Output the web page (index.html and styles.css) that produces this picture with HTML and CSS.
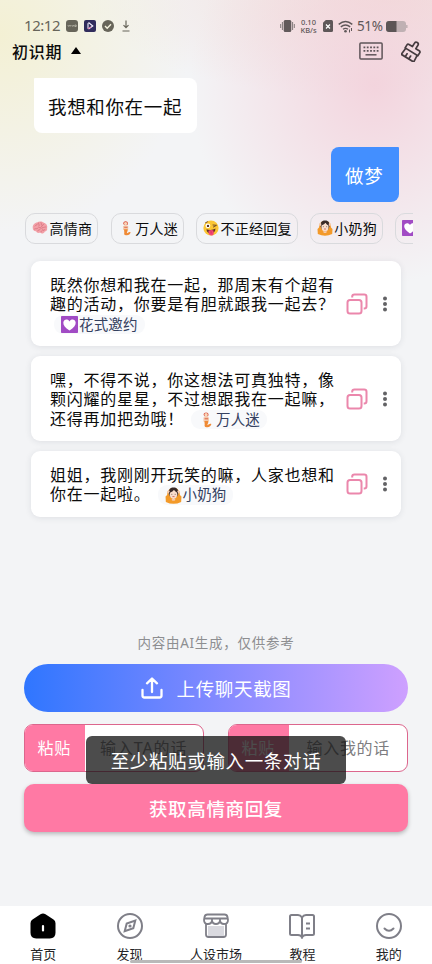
FILE: index.html
```
<!DOCTYPE html>
<html lang="zh-CN">
<head>
<meta charset="utf-8">
<title>初识期</title>
<link rel="stylesheet" href="styles.css">
</head>
<body>
<svg class="defs" width="0" height="0" aria-hidden="true">
  <symbol id="brain" viewBox="0 0 16 16">
    <path d="M.8 8C.2 5 3 2.5 5 2.5 7 .8 11 1.3 12.3 3c2.4.4 3.5 3 2.8 5 .6 2-.8 3.4-2.3 3.4-.8 2.4-3.5 2.8-4.5 1.2C6.500 13.300 4.500 13 4.200 11.300 2.200 11.500.600 10 .800 8Z" fill="#f2a0a7"/>
    <path d="M3 6c1-1.500 2-.500 2.500-2M2.500 9c2-1 2 .5 3.500-1M6.500 3c-.5 1.500 1.500 1.500.500 3M9 2.500c1 1-.5 2 1 3M12 4c-.5 1.500-2 .500-2.500 2.500M14 7c-1.500-.5-2 1-3.500.500M5.500 11c.500-1.500 2-.500 3-2M9 12c0-1.500 1.500-1 2-2.500M13 9.500l-1.500 1M7 7.500c1.500.500 2-.500 3 1" fill="none" stroke="#d8717d" stroke-width=".8" stroke-linecap="round"/>
  </symbol>
  <symbol id="mermaid" viewBox="0 0 16 16">
    <path d="M5.300 3.500C5.200.800 10 .500 9.900 3.600L9.500 5H6Z" fill="#d8503d"/>
    <circle cx="7.600" cy="3.500" r="1.600" fill="#f9d5b8"/>
    <path d="M6 5.500q1.700-.7 3.400 0l.2 4.500H6.200Z" fill="#f4c7a6"/>
    <path d="M5.700 6v4M9.700 6v3.500" stroke="#f1bd99" stroke-width=".9"/>
    <path d="M6.200 6.800h3.300v1H6.200Z" fill="#df6d54"/>
    <path d="M6 9.300h3.700c.3 2.200-1 2.600-.8 4 1.200-.4 2.200-1.700 3.700-1-.4 2-2 3.200-4.200 3-2.300.2-2.400-1.200-2.100-2.800Z" fill="#ef8a35"/>
  </symbol>
  <symbol id="wink" viewBox="0 0 16 16">
    <circle cx="8" cy="8" r="7.600" fill="#fbc634"/>
    <circle cx="4.900" cy="5.800" r="2.400" fill="#fff"/><circle cx="5" cy="5.900" r="1.200" fill="#563527"/>
    <path d="m10 5 3.500.3L10.400 7M2.500 2.800l2-1" fill="none" stroke="#654022" stroke-width=".9" stroke-linecap="round"/>
    <path d="M3.500 9.200q4.800 1.700 9-.6-.2 4.500-4.500 4.600T3.500 9.200Z" fill="#603323"/>
    <path d="M5.500 10.700q2.500-1 5-.3l.2 3.300q-.3 2-2.400 1.900T5.700 13.500Z" fill="#f44774"/>
    <path d="m8 11 .2 2.500" stroke="#c72b58" stroke-width=".6"/>
  </symbol>
  <symbol id="person" viewBox="0 0 16 16">
    <path d="M2 7.500 2.500 3.800 5 1.500l6 0 2.500 2.300.5 3.700 1.500 1.500-.3 5q-7.200 3.600-14.400 0L.5 9Z" fill="#f39a29"/>
    <path d="M3.500 6.500C3.100 1.600 6 .300 8 .500c3-.3 5 2 4.500 6l-1.400 3H5Z" fill="#392a28"/>
    <path d="m2 4.500 1.600-1.700 1 1.500L3 6.500ZM14 4.500l-1.600-1.700-1 1.500L13 6.500Z" fill="#f5cdb5"/>
    <ellipse cx="8" cy="7" rx="3.600" ry="4.200" fill="#f9ddcc"/>
    <path d="M4.400 5.500Q7.500 4.500 8.500 2.700q1 2 3.200 2.700Q11.500 2 8 2T4.400 5.500Z" fill="#392a28"/>
    <path d="M6.400 6.500v.6M9.600 6.500v.6" stroke="#493332" stroke-width=".9"/>
    <path d="M7 9h2" stroke="#c55d55" stroke-width=".8"/>
    <path d="M6.400 10.800q1.600 1 3.200 0v1.700q-1.600 1-3.200 0Z" fill="#f4c9ae"/>
  </symbol>
  <symbol id="heart" viewBox="0 0 16 16">
    <rect width="16" height="16" rx=".7" fill="#a14bc4"/>
    <path d="M8 13.600C3.900 10.800 2 8.500 2.200 6 2.500 2.800 6.500 2.200 8 5.100c1.500-2.900 5.500-2.300 5.800.9.200 2.500-1.700 4.800-5.800 7.600Z" fill="#fff"/>
  </symbol>
  <symbol id="copy" viewBox="0 0 22 22">
    <g fill="none" stroke="#eb87ac" stroke-width="2"><rect x="1.500" y="7" width="14" height="13.500" rx="2.500"/><path d="M6.200 4.500v-.7q0-2.300 2.300-2.300h9.700q2.300 0 2.300 2.300v9.400q0 2.300-2.300 2.300h-.5"/></g>
  </symbol>
  <symbol id="dots" viewBox="0 0 6 16">
    <g fill="#626265"><circle cx="3" cy="2.500" r="2"/><circle cx="3" cy="8" r="2"/><circle cx="3" cy="13.500" r="2"/></g>
  </symbol>
</svg>
<div class="app">
  <div class="status">
    <span class="clock">12:12</span>
    <svg class="notices" width="66" height="14" viewBox="0 0 66 14">
      <rect x="0" y="1" width="12" height="12" rx="3" fill="#67655a"/><path d="m1.800 6 1 1.500L3.700 6m1 0v1.500M5.800 6l1 1.500L7.800 6m1 0h1.400v1.500H8.800Z" fill="none" stroke="#d5d3c6" stroke-width=".6"/>
      <rect x="18" y="1" width="12" height="12" rx="2" fill="#302c5c"/><path d="M22 4.300v5.400M22.500 3.500l4.300 3.500-4.300 3" fill="none" stroke="#f5f2ff" stroke-width="1.100"/><path d="M22 9.700 25 8" stroke="#ec6ca6"/>
      <circle cx="42" cy="7" r="6" fill="#67655a"/><path d="m39 7 2.200 2.200L45 5.300" fill="none" stroke="#f5f3df" stroke-width="1.400"/>
      <path d="M60 1.500v7M57.500 6.200 60 8.700l2.500-2.500M56.500 12h7" fill="none" stroke="#67655a" stroke-width="1.200"/>
    </svg>
    <div class="signals">
      <svg width="15" height="14" viewBox="0 0 15 14"><rect x="3.700" y="1" width="7.600" height="12" rx="1.500" fill="#625a5b"/><path d="M2.400 3v8M.7 5v4M12.600 3v8M14.300 5v4" stroke="#81797a" stroke-width="1"/></svg>
      <span class="rate"><span>0.10</span><span>KB/s</span></span>
      <svg class="sim" width="10" height="12" viewBox="0 0 10 12"><path d="M2.800 0H8.500Q10 0 10 1.500v9Q10 12 8.500 12h-7Q0 12 0 10.500V2.800Z" fill="#5e5758"/><path d="m3 4.500 4 4m0-4-4 4" stroke="#fff" stroke-width="1.200"/></svg>
      <svg class="wifi" width="15" height="13" viewBox="0 0 15 13"><g fill="none" stroke="#5e5758" stroke-width="1.400"><path d="M.7 4.400Q7.500-1.300 14.300 4.400M2.800 6.900q4.700-3.800 9.400 0M5 9.300q2.500-1.900 5 0"/></g><circle cx="7.500" cy="11.300" r="1.300" fill="#5e5758"/><path d="M11.500 9.500v3M13.500 8v3" stroke="#5e5758"/></svg>
      <span class="percent">51%</span>
      <svg class="battery" width="22" height="11" viewBox="0 0 22 11"><rect width="20" height="11" rx="3" fill="#bfb0b3"/><path d="M3 0h7.500v11H3Q0 11 0 8V3Q0 0 3 0Z" fill="#5c5556"/><path d="M20.800 4v3" stroke="#bfb0b3" stroke-width="1.500"/></svg>
    </div>
  </div>
  <header class="header">
    <span>初识期</span><i class="caret"></i>
    <svg class="keyboard" width="24" height="18" viewBox="0 0 24 18"><rect x=".9" y=".9" width="22.200" height="16.200" rx="1" fill="none" stroke="#5f5559" stroke-width="1.500"/><path d="M4.500 5.300h15.500M4.500 8.800h15.500" stroke="#5f5559" stroke-width="1.800" stroke-dasharray="1.800 1.500"/><path d="M6.500 12.800h11" stroke="#5f5559" stroke-width="1.500"/></svg>
    <svg class="brush" width="22" height="22" viewBox="0 0 22 22"><g transform="rotate(32 11 11)" fill="none" stroke="#453b3f" stroke-width="1.700" stroke-linejoin="round" stroke-linecap="round"><path d="M9 7V3Q9 1 11 1t2 2V7h4q1.500 0 1.500 1.500V12h-15V8.500Q3.500 7 5 7ZM4.300 12l-.6 7.500h14.600l-.6-7.500M8.300 19v-3M12.500 19v-3"/></g></svg>
  </header>
  <main class="chat">
    <div class="bubble incoming">我想和你在一起</div>
    <div class="bubble outgoing">做梦</div>
  </main>
  <div class="chips">
    <span class="chip"><svg><use href="#brain"/></svg>高情商</span>
    <span class="chip"><svg><use href="#mermaid"/></svg>万人迷</span>
    <span class="chip"><svg><use href="#wink"/></svg>不正经回复</span>
    <span class="chip"><svg><use href="#person"/></svg>小奶狗</span>
    <span class="chip"><svg><use href="#heart"/></svg></span>
  </div>
  <section class="replies">
    <article class="card"><p>既然你想和我在一起，那周末有个超有<br>趣的活动，你要是有胆就跟我一起去？<br><span class="tag first"><svg><use href="#heart"/></svg>花式邀约</span></p><svg class="copy"><use href="#copy"/></svg><svg class="dots"><use href="#dots"/></svg></article>
    <article class="card"><p>嘿，不得不说，你这想法可真独特，像<br>颗闪耀的星星，不过想跟我在一起嘛，<br>还得再加把劲哦！<span class="tag"><svg><use href="#mermaid"/></svg>万人迷</span></p><svg class="copy"><use href="#copy"/></svg><svg class="dots"><use href="#dots"/></svg></article>
    <article class="card"><p>姐姐，我刚刚开玩笑的嘛，人家也想和<br>你在一起啦。<span class="tag"><svg><use href="#person"/></svg>小奶狗</span></p><svg class="copy"><use href="#copy"/></svg><svg class="dots"><use href="#dots"/></svg></article>
  </section>
  <section class="actions">
    <div class="hint">内容由AI生成，仅供参考</div>
    <div class="upload"><svg width="22" height="22" viewBox="0 0 22 22"><path d="M11 15V2M6 6.300 11 1.500l5 4.800M1.500 13v5.500q0 2 2 2h15q2 0 2-2V13" fill="none" stroke="#fff" stroke-width="2.300" stroke-linecap="round" stroke-linejoin="round"/></svg>上传聊天截图</div>
    <div class="inputs">
      <div class="field"><b>粘贴</b><span>输入TA的话</span></div>
      <div class="field"><b>粘贴</b><span>输入我的话</span></div>
      <div class="toast">至少粘贴或输入一条对话</div>
    </div>
    <div class="submit">获取高情商回复</div>
  </section>
  <nav class="tabs">
    <div class="tab"><svg viewBox="0 0 26 26"><path d="M10.500 1.300q2.500-1.700 5 0l8 5.200q2 1.300 2 3.800v9.500q0 5.700-5.700 5.700H6.200Q.5 25.500.500 19.800v-9.500Q.5 7.800 2.500 6.500Z" fill="#000"/><path d="M13 13v4.500" stroke="#fff" stroke-width="2.200" stroke-linecap="round"/></svg>首页</div>
    <div class="tab"><svg viewBox="0 0 26 26"><g fill="none" stroke="#7f7f88" stroke-width="2"><circle cx="13" cy="13" r="12"/><path d="m18.300 7.500-2 7.800-8.600 3 2-7.800Z"/></g><circle cx="13" cy="13" r="1.600" fill="#7f7f88"/></svg>发现</div>
    <div class="tab"><svg viewBox="0 0 26 26"><path d="M5 13h16v10H5Z" fill="#d9d9df"/><path d="M3 11v10.500q0 2.500 2.500 2.500h15q2.500 0 2.500-2.500V11M4.500 1.500h17Q24 1.500 24.500 4L25 7q0 4-4 4-3.500 0-4-3.500Q16.500 11 13 11T9 7.500Q8.500 11 5 11 1 11 1 7L1.500 4Q2 1.500 4.500 1.500ZM9 7.500V5.500M17 7.500V5.500M2 5.500h22" fill="none" stroke="#7f7f88" stroke-width="1.800" stroke-linejoin="round"/></svg>人设市场</div>
    <div class="tab"><svg viewBox="0 0 26 26"><path d="M13 4.500Q11.500 2 9 2H2.500Q1 2 1 3.500v17Q1 22 2.500 22H9q3 0 4 2.500Q14 22 17 22h6.500q1.500 0 1.500-1.500v-17Q25 2 23.500 2H17q-2.500 0-4 2.500Zm0 0v19M17 10.500h4M17 15.500h4" fill="none" stroke="#7f7f88" stroke-width="2"/></svg>教程</div>
    <div class="tab"><svg viewBox="0 0 26 26"><g fill="none" stroke="#7f7f88" stroke-width="2" stroke-linecap="round"><circle cx="13" cy="13" r="12"/><path d="M8.500 15.500q4.500 4.500 9 0"/></g></svg>我的</div>
    <i class="handle"></i>
  </nav>
</div>
</body>
</html>
```
FILE: styles.css
```
* { box-sizing: border-box; }
body {
  margin: 0;
  font-family: "Noto Sans", "Noto Sans CJK SC", sans-serif;
  color: #0c0c0c;
}
svg { flex: none; }
.defs { position: absolute; }
.app {
  width: 432px;
  height: 964px;
  overflow: hidden;
  display: flex;
  flex-direction: column;
  background:
    radial-gradient(ellipse 190px 200px at 0 35px, rgba(243, 240, 210, .95), rgba(243, 240, 210, 0)),
    radial-gradient(ellipse 185px 200px at 375px 85px, rgba(243, 209, 219, .9), rgba(243, 209, 219, 0)),
    radial-gradient(ellipse 300px 100px at 390px 0, rgba(241, 218, 213, .8), rgba(241, 218, 213, 0)),
    #f3f4f6;
}
.status {
  height: 24px;
  margin: 14px 24px 0 24px;
  display: flex;
  align-items: center;
  color: #67655a;
}
.clock { font-size: 15px; width: 42px; letter-spacing: -.45px; margin-top: -2px; }
.signals { margin-left: auto; display: flex; align-items: center; color: #5e5758; }
.rate {
  display: flex;
  flex-direction: column;
  align-items: center;
  width: 19px;
  margin: 0 5px 0 4px;
  font-size: 7.500px;
  font-weight: 500;
  line-height: 8px;
}
.sim { margin-right: 5px; }
.wifi { margin-right: 4px; }
.percent { font-size: 13.500px; width: 25px; letter-spacing: -.4px; }
.battery { margin-left: 4px; }
.header {
  height: 26px;
  padding: 0 9px 1px 12px;
  display: flex;
  align-items: center;
  font-size: 16px;
  font-weight: 500;
  letter-spacing: .7px;
}
.caret {
  border: solid transparent;
  border-width: 0 5.500px 7px;
  border-bottom-color: #000;
  margin-left: 9px;
}
.keyboard { margin-left: auto; margin-right: 18px; }
.chat {
  display: flex;
  flex-direction: column;
  gap: 14px;
  padding: 14px 33px 0 34px;
}
.bubble {
  height: 55px;
  padding: 0 14px;
  font-size: 18.500px;
  letter-spacing: .650px;
  line-height: 57px;
  white-space: nowrap;
}
.incoming { align-self: flex-start; width: 163px; background: #fff; border-radius: 1px 8px 8px 8px; }
.outgoing { align-self: flex-end; width: 68px; background: #438fff; color: #fff; border-radius: 8px 1px 8px 8px; }
.chips {
  width: 388px;
  margin: 11px 0 0 25px;
  display: flex;
  gap: 12px;
  overflow: hidden;
}
.chip {
  flex: none;
  height: 31px;
  border: 1px solid #d9dadd;
  border-radius: 10px;
  padding: 0 5px 1px 6px;
  display: flex;
  align-items: center;
  font-size: 14px;
  letter-spacing: .25px;
}
.chip:nth-child(n + 2) { position: relative; left: .5px; }
.chip svg { width: 16px; height: 16px; margin-right: 1.500px; }
.replies {
  display: flex;
  flex-direction: column;
  gap: 10px;
  margin: 17px 31px 0;
}
.card {
  display: flex;
  align-items: center;
  background: #fff;
  border-radius: 9px;
  box-shadow: 0 1px 6px rgba(40, 50, 70, .1);
  padding: 14.500px 13px 12.200px 19px;
}
.card p {
  margin: 0;
  width: 296px;
  font-size: 16px;
  line-height: 19.500px;
  letter-spacing: .75px;
  white-space: nowrap;
}
.card svg.copy, .card svg.dots { position: relative; top: -1px; }
.tag {
  display: inline-flex;
  align-items: center;
  height: 19.500px;
  margin-left: 7px;
  padding: 0 7px;
  vertical-align: top;
  background: #f8f9fb;
  border-radius: 9px;
  color: #34405f;
  font-size: 14.500px;
  letter-spacing: .15px;
}
.tag.first { margin-left: 4px; }
.tag svg { width: 17px; height: 17px; margin-right: 1px; }
.copy { width: 22px; height: 22px; margin-right: 14px; }
.dots { width: 6px; height: 16px; }
.actions { margin: auto 24px 74px; }
.hint {
  text-align: center;
  color: #8d8e91;
  font-size: 13.500px;
  letter-spacing: .75px;
  line-height: 20px;
  margin-bottom: 11px;
}
.upload {
  height: 48px;
  border-radius: 24px;
  background: linear-gradient(90deg, #2f76ff, #858aff 52%, #cea0ff);
  display: flex;
  align-items: center;
  justify-content: center;
  gap: 14px;
  color: #fff;
  font-size: 18.500px;
  letter-spacing: .650px;
}
.inputs { position: relative; display: flex; gap: 24px; margin: 12px 0; }
.field {
  flex: 1;
  height: 48px;
  display: flex;
  border: 1px solid #dc668d;
  border-radius: 9px;
  background: #fff;
  overflow: hidden;
  line-height: 47px;
  font-size: 16px;
  letter-spacing: .7px;
  white-space: nowrap;
}
.field b { width: 60px; padding-left: 12.500px; background: #ff79a4; color: #fff; font-weight: 400; }
.field span { padding-left: 15px; color: #7d7d80; letter-spacing: .9px; }
.field:nth-child(2) span { padding-left: 17.500px; letter-spacing: .7px; }
.toast {
  position: absolute;
  left: 62px;
  top: 12px;
  width: 260px;
  height: 48px;
  border-radius: 6px;
  background: rgba(20, 20, 20, .76);
  color: #fff;
  font-size: 18.500px;
  letter-spacing: .650px;
  line-height: 49px;
  text-align: center;
}
.submit {
  height: 48px;
  border-radius: 10px;
  background: #ff79a4;
  box-shadow: 0 2px 4px rgba(0, 0, 0, .25);
  color: #fff;
  font-size: 18.500px;
  font-weight: 500;
  letter-spacing: .650px;
  line-height: 49px;
  text-align: center;
}
.tabs { position: relative; flex: none; height: 58px; display: flex; background: #fff; }
.tab {
  flex: 1;
  display: flex;
  flex-direction: column;
  align-items: center;
  padding-top: 7px;
  font-size: 13px;
  line-height: 20px;
  color: #242426;
}
.tab svg { width: 26px; height: 26px; margin-bottom: 5px; }
.handle {
  position: absolute;
  left: 130px;
  top: 54px;
  width: 172px;
  height: 3px;
  border-radius: 2px;
  background: #b9b9b9;
}
```
